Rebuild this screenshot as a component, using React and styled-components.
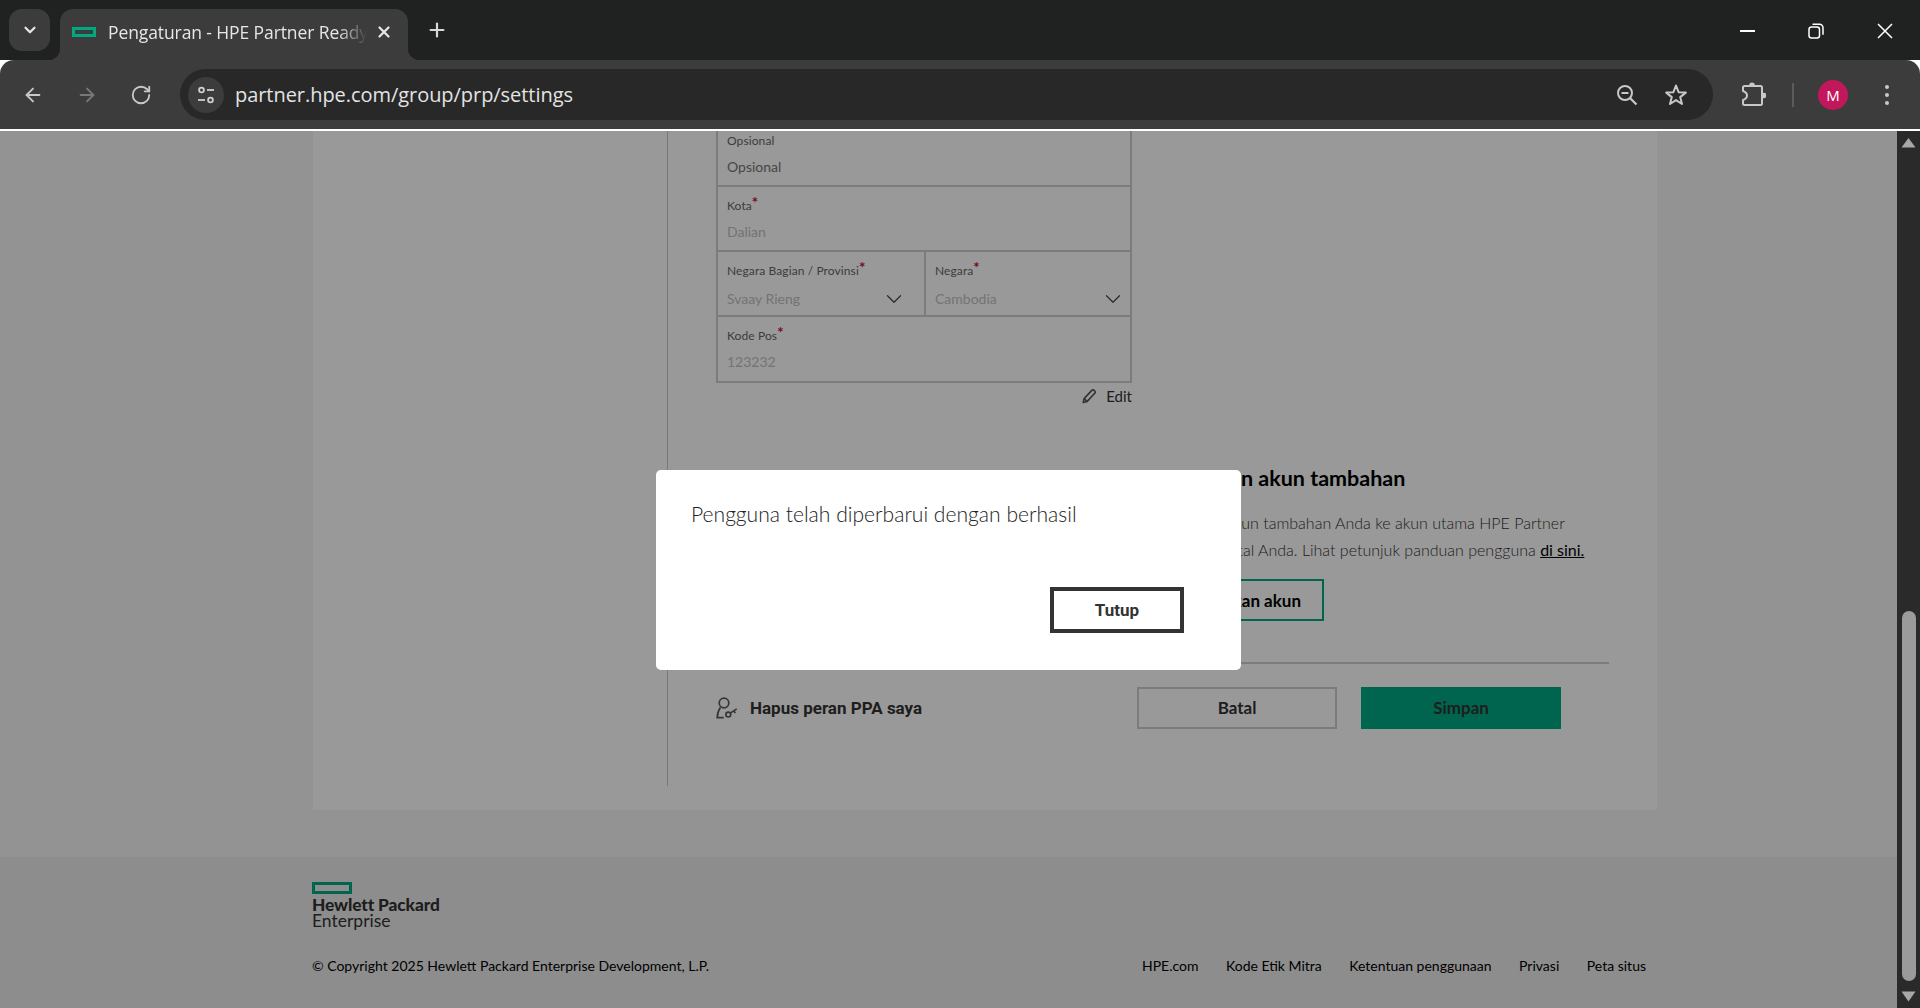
import React from 'react'
import styled, { createGlobalStyle } from 'styled-components'
import { ArrowLeft, ArrowRight, RotateCw, Plus, X, ChevronDown } from 'lucide-react'

const GlobalStyle = createGlobalStyle`
  html, body { margin: 0; padding: 0; height: 100%; overflow: hidden; background: #fff; }
  #root { height: 100%; }
  * { box-sizing: border-box; }
`

const Screen = styled.div`
  width: 1920px;
  height: 1008px;
  display: flex;
  flex-direction: column;
  font-family: Lato, "Noto Sans", sans-serif;
  overflow: hidden;
`

// browser chrome
const TabStrip = styled.div`
  height: 60px;
  flex: none;
  background: #202222;
  display: flex;
  align-items: flex-start;
  padding: 9px 0 0 9px;
  color: #e8e8e8;
`

const TabSearch = styled.div`
  width: 41px;
  height: 42px;
  border-radius: 13px;
  background: #3c3c3c;
  display: flex;
  align-items: center;
  justify-content: center;
`

const Tab = styled.div`
  position: relative;
  width: 348px;
  height: 51px;
  margin-left: 10px;
  background: #3c3c3c;
  border-radius: 13px 13px 0 0;
  display: flex;
  align-items: center;
  padding: 0 15px 6px 12px;

  &::before,
  &::after {
    content: '';
    position: absolute;
    bottom: 0;
    width: 12px;
    height: 12px;
  }
  &::before {
    left: -12px;
    background: radial-gradient(circle at 0 0, transparent 12px, #3c3c3c 12.5px);
  }
  &::after {
    right: -12px;
    background: radial-gradient(circle at 100% 0, transparent 12px, #3c3c3c 12.5px);
  }
`

const Favicon = styled.span`
  width: 24px;
  height: 10px;
  border: 3px solid #01a982;
  flex: none;
`

const TabTitle = styled.span`
  flex: 1;
  margin-left: 12px;
  font-family: "Open Sans", sans-serif;
  font-size: 17.5px;
  letter-spacing: -0.1px;
  white-space: nowrap;
  overflow: hidden;
  color: #e6e6e6;
  -webkit-mask-image: linear-gradient(to right, #000 86%, transparent 97%);
  mask-image: linear-gradient(to right, #000 86%, transparent 97%);
`

const NewTab = styled.div`
  margin: 10px 0 0 18px;
  display: flex;
`

const WindowControls = styled.div`
  margin: 7px 0 0 auto;
  display: flex;
  align-items: center;
  gap: 53px;
  padding-right: 27px;
  height: 30px;
`

const Toolbar = styled.div`
  height: 69px;
  flex: none;
  background: #3c3c3c;
  border-radius: 14px 14px 0 0;
  display: flex;
  align-items: center;
  padding: 0 22px;
  color: #c8c8c8;
  position: relative;
  z-index: 1;
`

const NavIcons = styled.div`
  display: flex;
  align-items: center;
  gap: 32px;
`

const AddressBar = styled.div`
  width: 1533px;
  height: 51px;
  margin-left: 28px;
  border-radius: 26px;
  background: #282828;
  display: flex;
  align-items: center;
  padding: 0 25px 0 8px;
`

const SiteChip = styled.div`
  width: 36px;
  height: 36px;
  border-radius: 50%;
  background: #3c3c3c;
  display: flex;
  align-items: center;
  justify-content: center;
`

const Url = styled.span`
  margin-left: 11px;
  font-family: "Open Sans", sans-serif;
  font-size: 20px;
  letter-spacing: -0.05px;
  color: #e3e3e3;
  flex: 1;
`

const AddressActions = styled.div`
  display: flex;
  align-items: center;
  gap: 26px;
`

const ToolActions = styled.div`
  display: flex;
  align-items: center;
  margin-left: 27px;
`

const Separator = styled.span`
  width: 2px;
  height: 24px;
  background: #5c5c5c;
  margin: 0 24px 0 26px;
`

const Avatar = styled.span`
  width: 30px;
  height: 30px;
  border-radius: 50%;
  background: #c2185b;
  color: #fff;
  font-family: "Open Sans", sans-serif;
  font-size: 15px;
  display: flex;
  align-items: center;
  justify-content: center;
`

const Kebab = styled.span`
  margin-left: 37px;
  display: flex;
  flex-direction: column;
  gap: 4px;
  span {
    width: 4px;
    height: 4px;
    border-radius: 50%;
    background: #c8c8c8;
  }
`

const WhiteLine = styled.div`
  height: 2px;
  flex: none;
  background: #fff;
`

// page
const Viewport = styled.div`
  flex: 1;
  min-height: 0;
  display: flex;
`

const PageArea = styled.div`
  position: relative;
  flex: 1;
  overflow: hidden;
  background: #f5f5f5;
  display: flex;
  flex-direction: column;
`

const Card = styled.main`
  width: 1344px;
  height: 679px;
  flex: none;
  margin-left: 313px;
  background: #fff;
  display: flex;
  align-items: flex-start;
`

const SideCol = styled.div`
  width: 355px;
  height: 655px;
  flex: none;
  border-right: 1px solid #c8c8c8;
`

const ContentCol = styled.div`
  padding-left: 48px;
  width: 940px;
`

const UpperRow = styled.div`
  display: flex;
  height: 531px;
`

const FormCol = styled.div`
  width: 416px;
  flex: none;
  margin-top: -9px;
`

const FormBox = styled.div`
  border: 2px solid #cfcfcf;
  border-top: 0;
`

const FieldRow = styled.div`
  display: flex;
  height: ${p => p.$height || 64}px;
  border-bottom: ${p => (p.$last ? 0 : '2px solid #cfcfcf')};
`

const Field = styled.div`
  flex: ${p => (p.$width ? `0 0 ${p.$width}px` : 1)};
  padding: 11px 10px 0 9px;
  position: relative;
  & + & {
    border-left: 2px solid #cfcfcf;
  }
`

const FieldLabel = styled.div`
  font-size: 12px;
  line-height: 16px;
  letter-spacing: 0.1px;
  color: #666;
  white-space: nowrap;
  sup {
    color: #c8103c;
    font-size: 15px;
    line-height: 0;
    vertical-align: 2px;
    font-weight: 700;
  }
`

const FieldValue = styled.div`
  margin-top: ${p => (p.$select ? 11 : 9)}px;
  font-size: 14px;
  line-height: 18px;
  color: ${p => (p.$disabled ? '#c2c2c2' : '#757575')};
`

const FieldChevron = styled.span`
  position: absolute;
  right: ${p => p.$right}px;
  bottom: 3px;
  display: flex;
  color: #444;
`

const EditLink = styled.div`
  display: flex;
  justify-content: flex-end;
  align-items: center;
  gap: 10px;
  margin-top: 3px;
  font-size: 15px;
  color: #333;
  line-height: 20px;
`

const InfoCol = styled.div`
  margin: 333px 0 0 36px;
  width: 450px;
  flex: none;
`

const InfoTitle = styled.h3`
  margin: 0;
  padding-left: 9px;
  font-size: 21.5px;
  line-height: 28px;
  font-weight: 700;
  color: #000;
  white-space: nowrap;
`

const InfoText = styled.p`
  margin: 17px 0 0;
  font-size: 16px;
  line-height: 27px;
  font-weight: 300;
  color: #333;
  white-space: nowrap;
  a {
    color: #000;
    font-weight: 400;
    text-decoration: underline;
  }
`

const OutlineButton = styled.div`
  margin-top: 16px;
  width: 156px;
  height: 42px;
  border: 2px solid #01a982;
  display: flex;
  align-items: center;
  justify-content: flex-end;
  padding-right: 21px;
  font-size: 17px;
  font-weight: 700;
  color: #000;
  white-space: nowrap;
`

const Divider = styled.div`
  width: 893px;
  height: 2px;
  background: #cfcfcf;
`

const ActionRow = styled.div`
  margin-top: 23px;
  width: 845px;
  display: flex;
  align-items: center;
`

const RemoveRole = styled.div`
  display: flex;
  align-items: center;
  gap: 11px;
  font-family: Roboto, sans-serif;
  font-size: 17px;
  font-weight: 700;
  color: #333;
  margin-right: auto;
`

const FormButton = styled.div`
  width: 200px;
  height: 42px;
  padding-bottom: 2px;
  margin-left: ${p => p.$gap || 0}px;
  display: flex;
  align-items: center;
  justify-content: center;
  font-size: 17px;
  font-weight: 700;
  color: #333;
  border: 2px solid ${p => (p.$primary ? '#01a982' : '#cfcfcf')};
  background: ${p => (p.$primary ? '#01a982' : 'transparent')};
`

const Footer = styled.footer`
  margin-top: 47px;
  flex: 1;
  background: #ebebeb;
  padding: 25px 0 0 312px;
`

const LogoMark = styled.div`
  width: 40px;
  height: 12px;
  border: 3px solid #01a982;
`

const LogoName = styled.div`
  margin-top: 3px;
  font-size: 17.3px;
  line-height: 16px;
  font-weight: 900;
  color: #333;
  letter-spacing: -0.1px;
`

const LogoSub = styled.div`
  font-size: 17.5px;
  line-height: 16px;
  color: #333;
`

const FooterBottom = styled.div`
  margin-top: 27px;
  width: 1334px;
  display: flex;
  justify-content: space-between;
  font-size: 14px;
  line-height: 20px;
  color: #000;
`

const FooterLinks = styled.div`
  display: flex;
  gap: 27.5px;
`

const Overlay = styled.div`
  position: absolute;
  inset: 0;
  background: rgba(0, 0, 0, 0.4);
  display: flex;
  align-items: center;
  justify-content: center;
`

const Dialog = styled.div`
  width: 585px;
  height: 200px;
  border-radius: 5px;
  background: #fff;
  padding: 31px 57px 37px 35px;
  display: flex;
  flex-direction: column;
`

const DialogText = styled.div`
  font-size: 21.1px;
  line-height: 26px;
  font-weight: 300;
  color: #222;
`

const CloseButton = styled.div`
  margin: auto 0 0 auto;
  width: 134px;
  height: 46px;
  border: 4px solid #333;
  display: flex;
  align-items: center;
  justify-content: center;
  font-family: Roboto, sans-serif;
  font-size: 17px;
  font-weight: 700;
  color: #333;
`

const Scrollbar = styled.div`
  width: 23px;
  flex: none;
  background: #2a2a2a;
  display: flex;
  flex-direction: column;
  align-items: center;
`

const ScrollThumb = styled.div`
  width: 14px;
  height: 370px;
  margin-top: 463px;
  border-radius: 7px;
  background: #9b9b9b;
`

const ScrollArrow = styled.svg`
  display: block;
  margin-top: ${p => p.$top}px;
`

const TuneIcon = () => (
  <svg width='20' height='20' viewBox='0 0 20 20' fill='none' stroke='#d0d0d0' strokeWidth='1.8'>
    <circle cx='5.5' cy='5' r='2.4' />
    <path d='M11 5h7' />
    <circle cx='14.5' cy='15' r='2.4' />
    <path d='M2 15h7' />
  </svg>
)

const ZoomOutIcon = () => (
  <svg width='22' height='22' viewBox='0 0 22 22' fill='none' stroke='#c8c8c8' strokeWidth='2'>
    <circle cx='9' cy='9' r='7' />
    <path d='M5.5 9h7' />
    <path d='M14 14l6.5 6.5' strokeWidth='2.2' />
  </svg>
)

const StarIcon = () => (
  <svg width='24' height='24' viewBox='0 0 24 24' fill='none' stroke='#c8c8c8' strokeWidth='2' strokeLinejoin='round'>
    <path d='M12 2.5L14.6 9.2 21.8 9.6 16.2 14.1 18 21 12 17.1 6 21 7.8 14.1 2.2 9.6 9.4 9.2Z' />
  </svg>
)

const PuzzleIcon = () => (
  <svg width='26' height='26' viewBox='0 0 26 26'>
    <circle cx='12' cy='3.4' r='2.8' fill='#c8c8c8' />
    <circle cx='23.6' cy='13.5' r='2.8' fill='#c8c8c8' />
    <path
      d='M4.5 4H20.5a1.5 1.5 0 0 1 1.5 1.5V21.5a1.5 1.5 0 0 1-1.5 1.5H4.5a1.5 1.5 0 0 1-1.5-1.5V18c3-1 4-2.5 4-4.5S6 10 3 9V5.5A1.5 1.5 0 0 1 4.5 4z'
      fill='#3c3c3c'
      stroke='#c8c8c8'
      strokeWidth='2'
      strokeLinejoin='round'
    />
  </svg>
)

const RestoreIcon = () => (
  <svg width='16' height='16' viewBox='0 0 16 16' fill='none' stroke='#fff' strokeWidth='1.5'>
    <rect x='1' y='4' width='10.5' height='11' rx='2.5' />
    <path d='M4.5 1.2h7a3.5 3.5 0 0 1 3.5 3.5v7' />
  </svg>
)

const PencilIcon = () => (
  <svg width='14' height='15' viewBox='0 0 14 15' fill='none' stroke='#555' strokeWidth='1.6' strokeLinejoin='round'>
    <path d='M1.2 13.6l.9-4L9.8 1.4a1.6 1.6 0 0 1 2.3 0l.6.6a1.6 1.6 0 0 1 0 2.3L5 12.6z' />
    <path d='M2.2 9.6l3 3' />
  </svg>
)

const PersonKeyIcon = () => (
  <svg width='23' height='23' viewBox='0 0 23 23' fill='none' stroke='#5a5a5a' strokeWidth='1.7'>
    <circle cx='8' cy='6' r='4.8' />
    <path d='M4.4 10.5C2.6 13 1.4 16 1.2 20.6h6.6' />
    <circle cx='12.3' cy='17.6' r='2.4' />
    <path d='M14.3 16.1l6.4-4.2M17.6 13.8l1.8 2.3' />
  </svg>
)

const HomeFooterLinks = ['HPE.com', 'Kode Etik Mitra', 'Ketentuan penggunaan', 'Privasi', 'Peta situs']

const App = () => {
  return (
    <Screen>
      <GlobalStyle />
      <TabStrip>
        <TabSearch>
          <ChevronDown size={18} strokeWidth={3} color='#e6e6e6' />
        </TabSearch>
        <Tab>
          <Favicon />
          <TabTitle>Pengaturan - HPE Partner Ready</TabTitle>
          <X size={18} strokeWidth={3} color='#e6e6e6' />
        </Tab>
        <NewTab>
          <Plus size={22} strokeWidth={2.4} color='#d8d8d8' />
        </NewTab>
        <WindowControls>
          <svg width='15' height='2' viewBox='0 0 15 2'>
            <rect width='15' height='2' fill='#fff' />
          </svg>
          <RestoreIcon />
          <svg width='16' height='16' viewBox='0 0 16 16' stroke='#fff' strokeWidth='1.5'>
            <path d='M1 1l14 14M15 1L1 15' />
          </svg>
        </WindowControls>
      </TabStrip>
      <Toolbar>
        <NavIcons>
          <ArrowLeft size={22} strokeWidth={2} />
          <ArrowRight size={22} strokeWidth={2} color='#787878' />
          <RotateCw size={22} strokeWidth={2} />
        </NavIcons>
        <AddressBar>
          <SiteChip>
            <TuneIcon />
          </SiteChip>
          <Url>partner.hpe.com/group/prp/settings</Url>
          <AddressActions>
            <ZoomOutIcon />
            <StarIcon />
          </AddressActions>
        </AddressBar>
        <ToolActions>
          <PuzzleIcon />
          <Separator />
          <Avatar>M</Avatar>
          <Kebab>
            <span />
            <span />
            <span />
          </Kebab>
        </ToolActions>
      </Toolbar>
      <WhiteLine />
      <Viewport>
        <PageArea>
          <Card>
            <SideCol />
            <ContentCol>
              <UpperRow>
                <FormCol>
                  <FormBox>
                    <FieldRow $height={65}>
                      <Field>
                        <FieldLabel>Opsional</FieldLabel>
                        <FieldValue>Opsional</FieldValue>
                      </Field>
                    </FieldRow>
                    <FieldRow $height={65}>
                      <Field>
                        <FieldLabel>
                          Kota<sup>*</sup>
                        </FieldLabel>
                        <FieldValue $disabled>Dalian</FieldValue>
                      </Field>
                    </FieldRow>
                    <FieldRow $height={65}>
                      <Field $width={206}>
                        <FieldLabel>
                          Negara Bagian / Provinsi<sup>*</sup>
                        </FieldLabel>
                        <FieldValue $disabled $select>
                          Svaay Rieng
                        </FieldValue>
                        <FieldChevron $right={17}>
                          <ChevronDown size={26} strokeWidth={1.1} />
                        </FieldChevron>
                      </Field>
                      <Field $width={206}>
                        <FieldLabel>
                          Negara<sup>*</sup>
                        </FieldLabel>
                        <FieldValue $disabled $select>
                          Cambodia
                        </FieldValue>
                        <FieldChevron $right={4}>
                          <ChevronDown size={26} strokeWidth={1.1} />
                        </FieldChevron>
                      </Field>
                    </FieldRow>
                    <FieldRow $height={64} $last>
                      <Field>
                        <FieldLabel>
                          Kode Pos<sup>*</sup>
                        </FieldLabel>
                        <FieldValue $disabled>123232</FieldValue>
                      </Field>
                    </FieldRow>
                  </FormBox>
                  <EditLink>
                    <PencilIcon />
                    Edit
                  </EditLink>
                </FormCol>
                <InfoCol>
                  <InfoTitle>Tautkan akun tambahan</InfoTitle>
                  <InfoText>
                    Tautkan akun tambahan Anda ke akun utama HPE Partner
                    <br />
                    Ready Portal Anda. Lihat petunjuk panduan pengguna <a>di sini.</a>
                  </InfoText>
                  <OutlineButton>Tautkan akun</OutlineButton>
                </InfoCol>
              </UpperRow>
              <Divider />
              <ActionRow>
                <RemoveRole>
                  <PersonKeyIcon />
                  Hapus peran PPA saya
                </RemoveRole>
                <FormButton>Batal</FormButton>
                <FormButton $primary $gap={24}>
                  Simpan
                </FormButton>
              </ActionRow>
            </ContentCol>
          </Card>
          <Footer>
            <LogoMark />
            <LogoName>Hewlett Packard</LogoName>
            <LogoSub>Enterprise</LogoSub>
            <FooterBottom>
              <span>© Copyright 2025 Hewlett Packard Enterprise Development, L.P.</span>
              <FooterLinks>
                {HomeFooterLinks.map(link => (
                  <span key={link}>{link}</span>
                ))}
              </FooterLinks>
            </FooterBottom>
          </Footer>
          <Overlay>
            <Dialog>
              <DialogText>Pengguna telah diperbarui dengan berhasil</DialogText>
              <CloseButton>Tutup</CloseButton>
            </Dialog>
          </Overlay>
        </PageArea>
        <Scrollbar>
          <ScrollArrow $top={6} width='15' height='11' viewBox='0 0 15 11'>
            <path d='M7.5 1L14.5 10.5H0.5z' fill='#a8a8a8' />
          </ScrollArrow>
          <ScrollThumb />
          <ScrollArrow $top={10} width='15' height='11' viewBox='0 0 15 11'>
            <path d='M7.5 10.5L14.5 0.5H0.5z' fill='#a8a8a8' />
          </ScrollArrow>
        </Scrollbar>
      </Viewport>
    </Screen>
  )
}

export default App
